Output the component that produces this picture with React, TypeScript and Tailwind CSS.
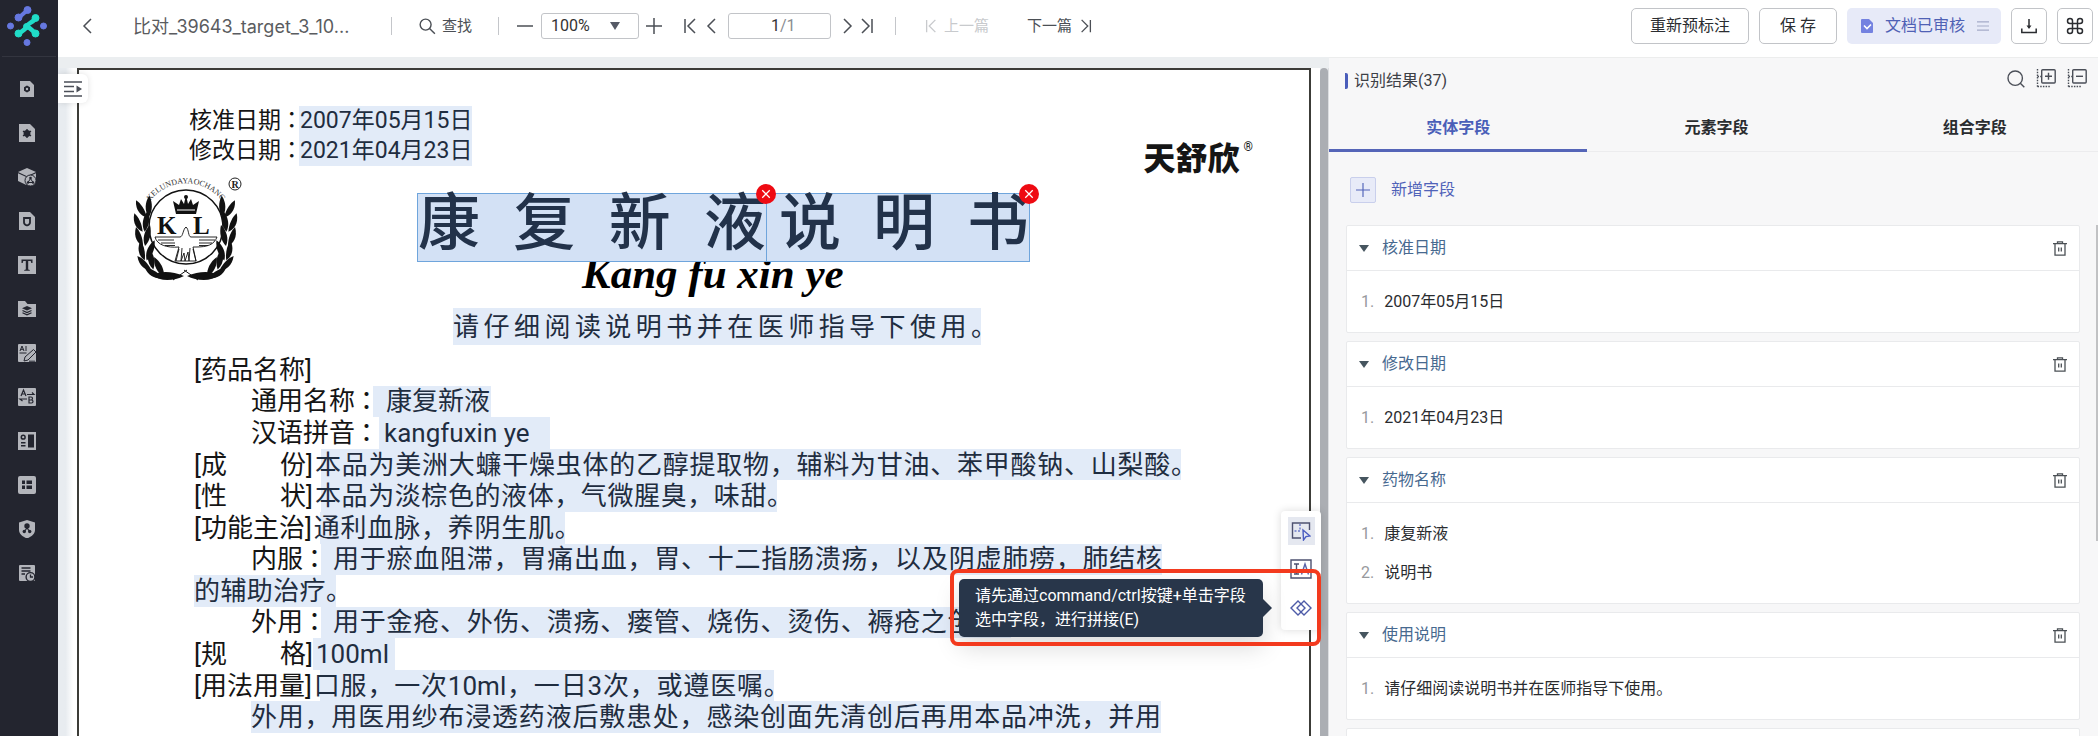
import React from "react";

type IconProps = { className?: string };

/* ---------- Side navigation ---------- */

const navDark = "#23252f";

const navIcons: { label: string; art: React.ReactNode }[] = [
  {
    label: "文档设置",
    art: (
      <>
        <path d="M2 1h10l4 4v12H2z" />
        <path fill={navDark} d="M9 5.6l3 1.7v3.4l-3 1.7-3-1.7V7.300z" />
        <circle cx="9" cy="9" r="1.200" />
      </>
    ),
  },
  {
    label: "模型配置",
    art: (
      <>
        <path d="M1 0h11l5 5v13H1z" />
        <circle fill={navDark} cx="9" cy="9.500" r="3.400" />
        <path stroke={navDark} strokeWidth="1.400" d="M9 5v9M5 7.200l8 4.600M5 11.800l8-4.600" />
      </>
    ),
  },
  {
    label: "模型仓库",
    art: (
      <>
        <path d="M9 0l9 4-9 4.200L0 4z" />
        <path d="M0 5.300l8.300 3.800V17L0 13z" />
        <path d="M9.500 9L18 5.200V13l-7 4z" />
        <circle cx="12.500" cy="12.500" r="5.500" stroke={navDark} />
        <path stroke={navDark} fill="none" d="M12.500 10.500l-2.500 4h5z" />
        <circle cx="12.500" cy="10" r="1.300" fill={navDark} />
        <circle cx="10" cy="14.500" r="1.200" fill={navDark} />
        <circle cx="15" cy="14.500" r="1.200" fill={navDark} />
      </>
    ),
  },
  {
    label: "文档安全",
    art: (
      <>
        <path d="M1 0h11l5 5v13H1z" />
        <path fill="none" stroke={navDark} strokeWidth="1.800" d="M6 6h6v4.500c0 1.500-1.500 2.500-3 3-1.500-.5-3-1.500-3-3z" />
      </>
    ),
  },
  {
    label: "文本",
    art: (
      <>
        <path d="M0 0h18v18H0z" />
        <path fill={navDark} d="M3.500 3.500h11v3.400h-1.200l-.6-1.800h-2.500v8.400l1.600.4v.9H6.200v-.9l1.600-.4V5.100H5.300l-.6 1.800H3.500z" />
      </>
    ),
  },
  {
    label: "数据集",
    art: (
      <>
        <path d="M0 1h7l2.500 3H18v13H0z" />
        <path fill={navDark} d="M9 6l5 2.200-5 2.200-5-2.200z" />
        <path stroke={navDark} fill="none" strokeWidth="1.200" d="M4.500 10.500L9 12.600l4.500-2.100M4.500 12.800L9 14.900l4.500-2.100" />
      </>
    ),
  },
  {
    label: "智能标注",
    art: (
      <>
        <path d="M1 0h16a1 1 0 0 1 1 1v16a1 1 0 0 1-1 1H1a1 1 0 0 1-1-1V1a1 1 0 0 1 1-1z" />
        <path fill="none" stroke={navDark} d="M2 7l2-5 2 5M2.800 5.300h2.500M8 2v5M1.500 9h7M6 17l1-4 8.500-7.500L18 8l-8 8z" />
        <path stroke={navDark} d="M11 17.200h6" />
      </>
    ),
  },
  {
    label: "文本对比",
    art: (
      <>
        <rect width="18" height="18" rx="1" />
        <path fill="none" stroke={navDark} strokeWidth="1.200" d="M3 8l2.500-6L8 8M4 6h3M9 6.500h7l-2-2M9 11H2l2.500 2M11 9v6h2.500a1.500 1.500 0 0 0 0-3H11h2a1.500 1.500 0 0 0 0-3z" />
      </>
    ),
  },
  {
    label: "布局配置",
    art: (
      <>
        <path d="M0 0h18v18H0z" />
        <path fill={navDark} d="M10 2.500h6v13h-6zM3 10h4.500v1.600H3zM3 13h4.500v1.600H3z" />
        <circle fill="none" stroke={navDark} strokeWidth="1.500" cx="5.200" cy="5.200" r="1.900" />
      </>
    ),
  },
  {
    label: "表格",
    art: (
      <>
        <rect width="18" height="18" rx="2" />
        <path fill={navDark} d="M4 4.500h3V8H4zM8.500 4.500H14V8H8.500zM4 9.500h3V13H4zM8.500 9.500H14V13H8.500z" />
      </>
    ),
  },
  {
    label: "权限管理",
    art: (
      <>
        <path d="M9 0l8 2.500V10c0 4-4 7-8 8.500C5 17 1 14 1 10V2.500z" />
        <circle fill={navDark} cx="9" cy="6" r="2.700" />
        <circle fill={navDark} cx="6.300" cy="11.500" r="1.700" />
        <circle fill={navDark} cx="11.700" cy="11.500" r="1.700" />
        <path stroke={navDark} strokeWidth="1.200" d="M9 8l-2.700 3.500M9 8l2.700 3.500" />
      </>
    ),
  },
  {
    label: "任务记录",
    art: (
      <>
        <path d="M2 1h14a1 1 0 0 1 1 1v14a1 1 0 0 1-1 1H2a1 1 0 0 1-1-1V2a1 1 0 0 1 1-1z" />
        <path stroke={navDark} strokeWidth="1.300" d="M3.500 4h9M3.500 7h9M3.500 10H7" />
        <circle cx="12.500" cy="13" r="4.400" stroke={navDark} strokeWidth="1.400" />
        <path stroke={navDark} fill="none" strokeWidth="1.300" d="M12.500 10.500V13h2.500" />
      </>
    ),
  },
];

function Logo() {
  return (
    <svg viewBox="0 0 40 40" className="size-10" aria-label="logo">
      <g fill="#6678e0" stroke="#6678e0">
        <circle cx="20.500" cy="4" r="3.500" />
        <circle cx="11.500" cy="11.500" r="3.500" />
        <path d="M20 4.500l-8 7" strokeWidth="4" />
        <circle cx="3.500" cy="20" r="3" />
        <circle cx="36.500" cy="20" r="3" />
        <circle cx="20" cy="36.500" r="3" />
      </g>
      <g fill="#20dcc8" stroke="#20dcc8">
        <path d="M28.500 12.500C25 17 21 17 20 20s-4 5-8.500 7.500M20 20c3 2.500 5 4 8.500 7.500" fill="none" strokeWidth="4.500" />
        <circle cx="28.500" cy="12" r="3.500" />
        <circle cx="11.500" cy="27.500" r="3.500" />
        <circle cx="28.500" cy="27.500" r="3.500" />
        <circle cx="19.500" cy="20.500" r="3" />
      </g>
    </svg>
  );
}

function SideNav() {
  return (
    <nav className="flex w-[58px] shrink-0 flex-col items-center bg-[#23252f] pr-1">
      <div className="-mr-1 flex h-[57px] w-full shrink-0 items-center justify-center border-b border-[#33353f] pr-1 pb-1">
        <Logo />
      </div>
      <div className="mt-[10px] flex flex-col">
        {navIcons.map((n) => (
          <button key={n.label} aria-label={n.label} className="flex h-11 w-[54px] items-center justify-center">
            <svg viewBox="0 0 18 18" className="size-[18px]" fill="#b3b5bb">
              {n.art}
            </svg>
          </button>
        ))}
      </div>
    </nav>
  );
}

/* ---------- Top bar ---------- */

function Line({ d, className = "size-4", w = 1.5 }: IconProps & { d: string; w?: number }) {
  return (
    <svg viewBox="0 0 16 16" className={className} fill="none" stroke="currentColor" strokeWidth={w}>
      <path d={d} />
    </svg>
  );
}

const paths = {
  left: "M11 1L4 8l7 7",
  right: "M5 1l7 7-7 7",
  first: "M3 1v14M13 1L6 8l7 7",
  last: "M13 1v14M3 1l7 7-7 7",
  minus: "M0 8h16",
  plus: "M0 8h16M8 0v16",
};

function Divider({ className = "" }: IconProps) {
  return <span className={`h-[18px] w-px bg-[#c4c6ca] ${className}`} />;
}

function TopBar() {
  return (
    <header className="flex h-[57px] shrink-0 items-start justify-between bg-white pr-[5px] text-[#4b4f55]">
      <div className="flex h-[52px] items-center whitespace-nowrap">
        <button aria-label="返回" className="ml-[22px]">
          <Line d={paths.left} className="size-4" />
        </button>
        <h1 className="ml-[37px] w-[228px] font-[Inter,Noto_Sans_CJK_SC,sans-serif] text-[18px] text-[#5a5c60]">比对_39643_target_3_10...</h1>
        <Divider className="ml-[30px]" />
        <button className="ml-[27px] flex items-center gap-[6px] text-[15px]">
          <svg viewBox="0 0 18 18" className="size-[17px]" fill="none" stroke="currentColor" strokeWidth="1.500">
            <circle cx="7" cy="7" r="5.800" />
            <path d="M11.200 11.200l5.600 5.600" />
          </svg>
          查找
        </button>
        <Divider className="ml-[26px]" />
        <button aria-label="缩小" className="ml-[18px]">
          <Line d={paths.minus} />
        </button>
        <div className="relative ml-2 flex items-center">
          <select aria-label="缩放比例" className="h-[26px] w-[98px] appearance-none rounded-[3px] border border-[#c2c4c8] bg-white pl-[9px] text-[16px] text-[#333]">
            <option>100%</option>
          </select>
          <svg viewBox="0 0 10 8" className="pointer-events-none absolute right-[19px] h-2 w-[10px]" fill="#555a66">
            <path d="M0 0h10L5 8z" />
          </svg>
        </div>
        <button aria-label="放大" className="ml-[7px]">
          <Line d={paths.plus} />
        </button>
        <button aria-label="第一页" className="ml-5">
          <Line d={paths.first} />
        </button>
        <button aria-label="上一页" className="ml-[6px]">
          <Line d={paths.left} />
        </button>
        <div className="ml-2 flex h-[26px] w-[103px] items-center rounded-[3px] border border-[#c2c4c8] text-[16px]">
          <input aria-label="页码" defaultValue="1" className="w-[51px] bg-transparent text-right text-[#333] outline-none" />
          <span className="text-[#8a8d92]">/1</span>
        </div>
        <button aria-label="下一页" className="ml-2">
          <Line d={paths.right} />
        </button>
        <button aria-label="最后一页" className="ml-1">
          <Line d={paths.last} />
        </button>
        <Divider className="ml-5" />
        <button disabled className="ml-[28px] flex items-center gap-[6px] text-[15px] text-[#c8cacd]">
          <Line d={paths.first} className="size-[14px]" />
          上一篇
        </button>
        <button className="ml-[38px] flex items-center gap-[7px] text-[15px]">
          下一篇
          <Line d={paths.last} className="size-[14px]" />
        </button>
      </div>
      <div className="flex h-[52px] items-center gap-[10px] text-[16px] text-[#2b2d31]">
        <button className="h-9 rounded-[5px] border border-[#c2c4c8] px-[18px]">重新预标注</button>
        <button className="h-9 rounded-[5px] border border-[#c2c4c8] px-5">保 存</button>
        <button className="flex h-9 items-center rounded-[5px] bg-[#e7eaf8] pr-3 pl-[14px] text-[#4f61b5]">
          <svg viewBox="0 0 12 14" className="mr-3 h-[14px] w-3">
            <path fill="#7482e0" d="M1 0h7l4 4v9a1 1 0 0 1-1 1H1a1 1 0 0 1-1-1V1a1 1 0 0 1 1-1z" />
            <path fill="none" stroke="#fff" strokeWidth="1.600" d="M3 6.500l3 3 4-4" />
          </svg>
          文档已审核
          <svg viewBox="0 0 12 10" className="ml-3 h-[10px] w-3" stroke="#a5abc8" strokeWidth="1.200">
            <path d="M0 .8h12M0 5h12M0 9.200h12" />
          </svg>
        </button>
        <button aria-label="下载" className="flex size-9 items-center justify-center rounded-[5px] border border-[#c2c4c8]">
          <svg viewBox="0 0 16 16" className="size-4" fill="none" stroke="currentColor" strokeWidth="1.500">
            <path d="M.8 10.500v4h14.400v-4M8 1v9" />
            <path d="M5.500 7.500h5L8 11z" fill="currentColor" stroke="none" />
          </svg>
        </button>
        <button aria-label="快捷键" className="flex size-9 items-center justify-center rounded-[5px] border border-[#c2c4c8]">
          <svg viewBox="0 0 24 24" className="size-5" fill="none" stroke="currentColor" strokeWidth="1.800">
            <path d="M15 6v12a3 3 0 1 0 3-3H6a3 3 0 1 0 3 3V6a3 3 0 1 0-3 3h12a3 3 0 1 0-3-3" />
          </svg>
        </button>
      </div>
    </header>
  );
}

/* ---------- Document ---------- */

const leaves = [
  [6, 76, 8],
  [3, 62, 0],
  [2, 48, -4],
  [5, 34, -12],
  [8, 88, -24],
  [17, 97, -40],
];

function Wreath() {
  return (
    <g fill="#111">
      {leaves.map(([x, y, r], i) => (
        <g key={i} transform={`translate(${x + 5} ${y - 2}) rotate(${r})`}>
          <path d="M-5-10C-8 0-3 7 2 9 2 1-1-6-5-10z" />
          <path d="M9-12C3-6 1 2 4 9 9 4 11-4 9-12z" />
        </g>
      ))}
      <path d="M19 98c8-4 20-4 32 1-10 5-24 6-32-1z" />
    </g>
  );
}

function Emblem() {
  return (
    <svg viewBox="0 0 108 104" className="h-[104px] w-[108px] shrink-0 overflow-visible" aria-label="KL">
      <defs>
        <path id="arc" d="M10 38A45 45 0 0 1 96 38" />
      </defs>
      <text fontFamily="Liberation Serif, serif" fontSize="8" fill="#333">
        <textPath href="#arc" startOffset="50%" textAnchor="middle">
          KELUNDAYAOCHANG
        </textPath>
      </text>
      <circle cx="53" cy="50" r="37" fill="none" stroke="#111" strokeWidth="1.500" />
      <Wreath />
      <g transform="translate(105 0) scale(-1 1)">
        <Wreath />
      </g>
      <path d="M40 103l14-10M65 103L51 93" stroke="#111" />
      <path fill="#111" d="M43 37l-3-13 6 4 2-6 3 5 2-9 2 9 3-5 2 6 6-4-3 13z" />
      <path stroke="#fff" d="M44 33h18" />
      <circle cx="53" cy="20" r="2" fill="#111" />
      <text x="24" y="57" fontFamily="Liberation Serif, serif" fontWeight="700" fontSize="25" fill="#111">
        K
      </text>
      <text x="60" y="57" fontFamily="Liberation Serif, serif" fontWeight="700" fontSize="25" fill="#111">
        L
      </text>
      <path fill="#fff" stroke="#111" strokeWidth=".9" d="M22 60h25c3 0 3-8 6-10 3 2 2 10 5 10h26c-3 8-10 10-21 10l-3 0 3 14H42l4-14c-12 1-22-2-24-10z" />
      <path stroke="#111" strokeWidth=".9" fill="none" d="M25 63h16M28 66h14M32 68.500h10M66 63h16M66 66h13M66 68.500h9M46 72l-3 12M49 71l-1 13 3-8 1 8 3-9 1 9 1-13M60 72l3 12" />
      <circle cx="102" cy="7" r="6" fill="none" stroke="#222" />
      <text x="102" y="10.500" textAnchor="middle" fontFamily="Liberation Serif, serif" fontWeight="700" fontSize="10" fill="#222">
        R
      </text>
    </svg>
  );
}

function RemoveBadge() {
  return (
    <button aria-label="取消选择" className="absolute -top-[10px] -right-[10px] z-10 flex size-5 items-center justify-center rounded-full bg-[#ee0a12] text-white">
      <Line d="M2 2l12 12M14 2L2 14" className="size-[10px]" w={2} />
    </button>
  );
}

type DocRow = {
  label?: string;
  spread?: boolean;
  indent?: boolean;
  value?: string;
  /* width of the recognised region */
  box?: string;
  /* region placement relative to the label, and the text inside it */
  place?: string;
  text?: string;
};

const justified = "[text-align-last:justify]";
const stopAtEnd = { place: "ml-2", text: "-ml-[6px] -mr-4 [text-align-last:justify]" };

const docRows: DocRow[] = [
  { label: "[药品名称]" },
  { label: "通用名称：", indent: true, value: "康复新液", box: "w-[118px]", place: "", text: "ml-[13px]" },
  { label: "汉语拼音：", indent: true, value: "kangfuxin ye", box: "w-[171px]", place: "ml-[6px]", text: "ml-[5px]" },
  { label: "[成份]", spread: true, value: "本品为美洲大蠊干燥虫体的乙醇提取物，辅料为甘油、苯甲酸钠、山梨酸。", box: "w-[860px]", ...stopAtEnd },
  { label: "[性状]", spread: true, value: "本品为淡棕色的液体，气微腥臭，味甜。", box: "w-[456px]", ...stopAtEnd },
  { label: "[功能主治]", value: "通利血脉，养阴生肌。", box: "w-[245px]", ...stopAtEnd },
  { label: "内服：", indent: true, value: "用于瘀血阻滞，胃痛出血，胃、十二指肠溃疡，以及阴虚肺痨，肺结核", box: "w-[841px]", place: "", text: "ml-[12px] [text-align-last:justify]" },
  { value: "的辅助治疗。", box: "w-[142px]", place: "", text: "-mr-4 [text-align-last:justify]" },
  { label: "外用：", indent: true, value: "用于金疮、外伤、溃疡、瘘管、烧伤、烫伤、褥疮之创面。", box: "w-[690px]", place: "", text: "ml-[12px] -mr-4 [text-align-last:justify]" },
  { label: "[规格]", spread: true, value: "100ml", box: "w-[82px]", place: "", text: "ml-[3px]" },
  { label: "[用法用量]", value: "口服，一次10ml，一日3次，或遵医嘱。", box: "w-[454px]", ...stopAtEnd },
  { indent: true, value: "外用，用医用纱布浸透药液后敷患处，感染创面先清创后再用本品冲洗，并用", box: "w-[910px]", place: "", text: "[text-align-last:justify]" },
];

/* The leaflet prints a centred, half-width colon after its labels. */
function Label({ text }: { text: string }) {
  const colon = text.endsWith("：");
  return (
    <span className="flex items-center">
      {colon ? text.slice(0, -1) : text}
      {colon && <span className="pl-[5px] font-[Roboto,Noto_Sans_CJK_TC,sans-serif] [font-feature-settings:'halt']">：</span>}
    </span>
  );
}

function DocLine({ row }: { row: DocRow }) {
  return (
    <p className={`flex items-stretch whitespace-nowrap ${row.indent ? "pl-[57px]" : ""}`}>
      {row.label && row.spread ? (
        <span className="flex w-[119px] items-center justify-between">
          <span>{row.label.slice(0, 2)}</span>
          <span>{row.label.slice(2)}</span>
        </span>
      ) : (
        row.label && <Label text={row.label} />
      )}
      {row.value && (
        <mark className={`flex items-center bg-[#e2ebf8] text-[#1f2d40] ${row.box} ${row.place}`}>
          <span className={`flex-1 ${row.text}`}>{row.value}</span>
        </mark>
      )}
    </p>
  );
}

const dates = [
  ["核准日期：", "2007年05月15日"],
  ["修改日期：", "2021年04月23日"],
];

function DocumentPage() {
  return (
    <article className="min-w-0 flex-1 overflow-hidden border-x-2 border-t-2 border-[#3c3c38] bg-white text-[#151515]">
      <div className="flex h-[107px] items-start justify-between pt-[36px] pr-[56px] pl-[110px]">
        <div className="text-[23px] leading-[30px] whitespace-nowrap">
          {dates.map(([label, value]) => (
            <p key={label} className="flex h-[30px]">
              <span className="flex w-[110px]">
                <Label text={label} />
              </span>
              <mark className="bg-[#e2ebf8] pl-px text-[#1f2d40]">{value}</mark>
            </p>
          ))}
        </div>
        <p className="flex items-start self-end text-[32px] leading-[36px] font-black">
          天舒欣<sup className="top-0 pl-1 text-[12px] leading-[12px] font-normal">®</sup>
        </p>
      </div>
      <div className="flex pl-[54px]">
        <Emblem />
        <div className="ml-[176px] flex flex-col items-start pt-4">
          <div className="flex h-[69px] text-[62px] leading-[60px] font-medium whitespace-nowrap text-[#22324a]">
            <div className={`relative w-[350px] border border-[#6fa5dc] bg-[#d3e1f5] ${justified}`}>
              康复新液
              <RemoveBadge />
            </div>
            <div className={`relative -ml-px w-[264px] border border-[#6fa5dc] bg-[#d3e1f5] pl-3 ${justified}`}>
              说明书
              <RemoveBadge />
            </div>
          </div>
          <p className="h-[46px] pl-[165px] font-[Liberation_Serif,serif] text-[43px] leading-6 font-bold whitespace-nowrap text-black italic">Kang fu xin ye</p>
          <mark className="ml-9 flex h-[37px] w-[528px] items-center bg-[#e2ebf8] text-[26px] leading-[30px] whitespace-nowrap text-[#1f2d40]">
            <span className={`-mr-4 flex-1 ${justified}`}>请仔细阅读说明书并在医师指导下使用。</span>
          </mark>
        </div>
      </div>
      <div className="mt-[9px] grid h-[379px] auto-rows-fr pl-[115px] text-[26px] leading-[30px]">
        {docRows.map((row, i) => (
          <DocLine key={i} row={row} />
        ))}
      </div>
    </article>
  );
}

function FloatingTools() {
  return (
    <div className="absolute top-[454px] right-2 flex w-10 flex-col items-center rounded-[4px] bg-white py-[6px] shadow-[0_0_8px_rgba(0,0,0,0.15)]">
      <button aria-label="框选" className="flex h-7 w-[27px] items-center justify-center bg-[#e5e8f0]">
        <svg viewBox="0 0 20 20" className="size-5" fill="none" stroke="#4d5170" strokeWidth="1.400">
          <path d="M10 17H1.500V2h17v7" />
          <path d="M9 3v7H2" stroke="#6b79c9" strokeDasharray="2 1.500" />
          <path d="M12 9l7 6-4 .6-2.500 3.400z" stroke="#4a5cc0" />
        </svg>
      </button>
      <button aria-label="文本选择" className="mt-[10px] flex h-7 w-[27px] items-center justify-center">
        <svg viewBox="0 0 22 20" className="h-5 w-[22px]" fill="none" stroke="#4d5170" strokeWidth="1.400">
          <path d="M1 1h20v18H1zM4 5h5M6.500 5v10M4 15h5" />
          <path d="M11.500 15.500L15 5l3.500 10.500M12.800 12h4.500" stroke="#5a63a8" />
        </svg>
      </button>
      <button aria-label="拼接" className="mt-[9px] flex h-8 w-[27px] items-center justify-center">
        <svg viewBox="0 0 22 16" className="h-4 w-[22px]" fill="none" stroke="#4d5ba8" strokeWidth="1.400">
          <path d="M8 1l7 7-7 7-7-7z" />
          <path d="M14 1l7 7-7 7-7-7z" />
        </svg>
      </button>
    </div>
  );
}

function Viewer() {
  return (
    <section className="relative flex min-w-0 overflow-hidden bg-[#ebeef0] pt-[11px]">
      <div className="w-[19px] shrink-0 bg-linear-to-r from-[#e8ecf0] from-40% to-white to-80%" />
      <DocumentPage />
      <div className="w-[9px] shrink-0 bg-white" />
      <div className="w-2 shrink-0 rounded-t-[4px] bg-[#abaeb3]" />
      <div className="w-px shrink-0 bg-[#dcdee1]" />

      <button aria-label="展开目录" className="absolute top-[17px] left-0 flex h-[29px] w-[30px] items-center justify-center rounded-r-[6px] bg-white shadow-[0_0_6px_rgba(0,0,0,0.12)]">
        <svg viewBox="0 0 18 16" className="h-4 w-[18px]" fill="none" stroke="#4b4f58" strokeWidth="1.500">
          <path d="M0 1h18M0 5.500h10M0 10.500h10M0 15h18" />
          <path d="M12.500 4.500L18 8l-5.500 3.500z" fill="#4b4f58" stroke="none" />
        </svg>
      </button>

      <FloatingTools />
      <div role="tooltip" className="absolute top-[522px] right-[66px] w-[304px] rounded-[5px] bg-[#28364a] py-[5px] pl-4 text-[16px] leading-6 whitespace-nowrap text-white shadow-[0_10px_24px_rgba(0,0,0,0.15)]">
        请先通过command/ctrl按键+单击字段
        <br />
        选中字段，进行拼接(E)
        <svg viewBox="0 0 9 18" className="absolute top-5 -right-[9px] h-[18px] w-[9px]" fill="#28364a">
          <path d="M0 0l9 9-9 9z" />
        </svg>
      </div>
      <div className="pointer-events-none absolute top-[512px] right-2 h-[77px] w-[371px] rounded-[8px] border-4 border-[#f33a1e]" />
    </section>
  );
}

/* ---------- Results panel ---------- */

const fields = [
  { name: "核准日期", items: ["2007年05月15日"] },
  { name: "修改日期", items: ["2021年04月23日"] },
  { name: "药物名称", items: ["康复新液", "说明书"] },
  { name: "使用说明", items: ["请仔细阅读说明书并在医师指导下使用。"] },
];

function TreeToggle({ d }: { d: string }) {
  return (
    <svg viewBox="0 0 20 19" className="h-[19px] w-5" fill="none" stroke="#4b4f58" strokeWidth="1.400">
      <rect x="5.700" y=".7" width="13.500" height="13.300" rx="1" />
      <path d={d} />
      <path d="M1.500 0v18M1.500 17.500H15M1.500 7.500h4" strokeDasharray="1.500 1.200" />
    </svg>
  );
}

function FieldCard({ name, items }: { name: string; items: string[] }) {
  return (
    <section className="shrink-0 rounded-[2px] border border-[#e9eaec] bg-white">
      <div className="flex h-[45px] items-center border-b border-[#e9eaec] pr-3 pl-3">
        <button className="flex items-center gap-[13px] text-[#47698f]">
          <svg viewBox="0 0 10 7" className="h-[7px] w-[10px]" fill="#46555f">
            <path d="M0 0h10L5 7z" />
          </svg>
          {name}
        </button>
        <button aria-label={`删除${name}`} className="ml-auto">
          <svg viewBox="0 0 14 15" className="h-[15px] w-[14px]" fill="none" stroke="#4b5055" strokeWidth="1.300">
            <path d="M0 2.700h14M4.500 2.500V.8h5v1.700M2 3v11.200h10V3M5.700 6.500v4M8.300 6.500v4" />
          </svg>
        </button>
      </div>
      <ol className="py-[11px] pl-[14px]">
        {items.map((item, i) => (
          <li key={item} className="flex h-[39px] items-center gap-[10px] text-[#2a2c2f]">
            <span className="text-[#97999d]">{i + 1}.</span>
            {item}
          </li>
        ))}
      </ol>
    </section>
  );
}

function ResultsPanel() {
  return (
    <aside className="relative flex min-w-0 flex-col overflow-hidden border-t border-[#eceded] bg-[#f7f7f8] text-[16px]">
      <div className="flex h-[45px] shrink-0 items-center pr-[11px] pl-4">
        <span className="mr-[6px] h-4 w-[3px] rounded-r-[2px] bg-[#4a5dba]" />
        <h2 className="text-[#3d4046]">识别结果(37)</h2>
        <div className="ml-auto flex items-center gap-[11px] pb-1">
          <button aria-label="搜索">
            <svg viewBox="0 0 18 18" className="size-[18px]" fill="none" stroke="#4b4f58" strokeWidth="1.400">
              <circle cx="8.200" cy="8.200" r="7.200" />
              <path d="M13.300 13.300l4 4" />
            </svg>
          </button>
          <button aria-label="全部展开">
            <TreeToggle d="M9 7.300h7M12.500 3.800v7" />
          </button>
          <button aria-label="全部收起">
            <TreeToggle d="M9 7.300h7" />
          </button>
        </div>
      </div>
      <div role="tablist" className="-mr-[6px] grid h-[49px] shrink-0 grid-cols-3 border-b border-[#ececee] font-bold text-[#2a2c2f]">
        <button role="tab" aria-selected className="-mb-px border-b-[3px] border-[#5565b8] pt-1 text-[#4a5fb8]">
          实体字段
        </button>
        <button role="tab" className="pt-[2px]">
          元素字段
        </button>
        <button role="tab" className="pt-[2px]">
          组合字段
        </button>
      </div>
      <button className="mt-[25px] ml-[21px] flex w-fit shrink-0 items-center gap-[15px] text-[#5063b8]">
        <span className="flex size-[26px] items-center justify-center rounded-[2px] border border-[#c9cfec] bg-[#e8ebf8]">
          <Line d={paths.plus} className="size-[14px]" w={1.3} />
        </span>
        新增字段
      </button>
      <div className="mt-[22px] flex min-h-0 flex-col gap-2 overflow-hidden pr-[18px] pl-[17px]">
        {fields.map((f) => (
          <FieldCard key={f.name} {...f} />
        ))}
        <section className="h-[108px] shrink-0 rounded-[2px] border border-[#e9eaec] bg-white" />
      </div>
      <div className="absolute top-[167px] right-0 h-[316px] w-[2px] bg-[#c1c2c4]" />
    </aside>
  );
}

export default function App() {
  return (
    <div className="flex h-screen overflow-hidden bg-white font-[Roboto,Noto_Sans_CJK_SC,sans-serif]">
      <SideNav />
      <div className="flex min-w-0 flex-1 flex-col">
        <TopBar />
        <main className="grid min-h-0 flex-1 grid-cols-[1271fr_769fr]">
          <Viewer />
          <ResultsPanel />
        </main>
      </div>
    </div>
  );
}
